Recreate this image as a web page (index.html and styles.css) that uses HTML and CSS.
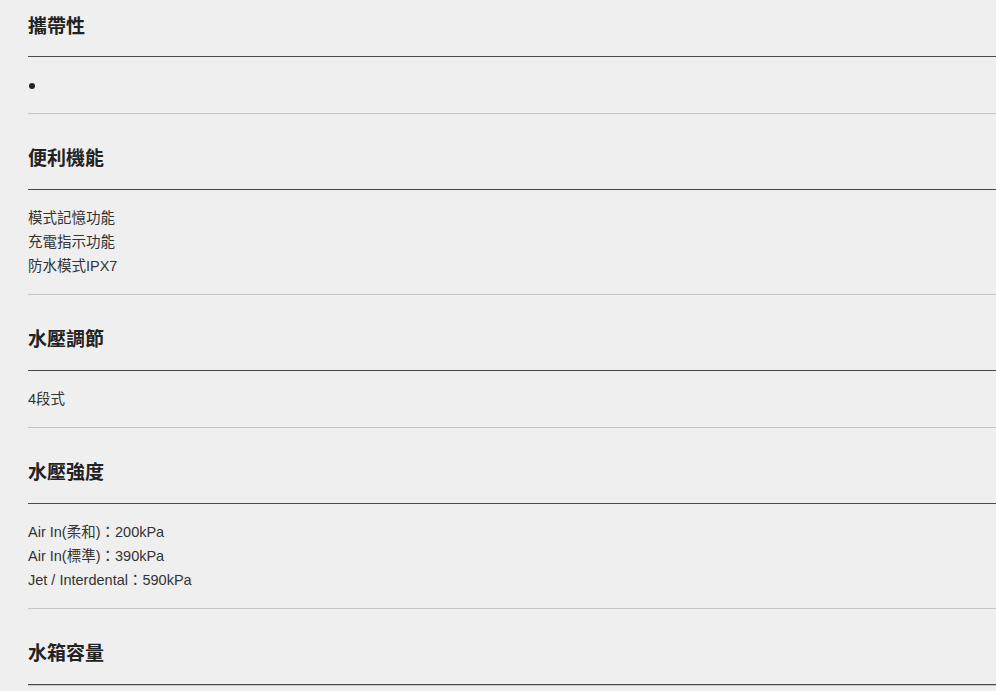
FILE: index.html
```html
<!DOCTYPE html>
<html lang="zh-Hant">
<head>
<meta charset="utf-8">
<title>規格</title>
<link rel="stylesheet" href="styles.css">
</head>
<body>
<div class="specs">
  <section class="spec spec-first">
    <h3 class="spec-title">攜帶性</h3>
    <ul class="spec-body bullets"><li><span class="dot"></span></li></ul>
  </section>
  <section class="spec">
    <h3 class="spec-title">便利機能</h3>
    <div class="spec-body">
      <p>模式記憶功能</p>
      <p>充電指示功能</p>
      <p>防水模式IPX7</p>
    </div>
  </section>
  <section class="spec">
    <h3 class="spec-title">水壓調節</h3>
    <div class="spec-body">
      <p>4段式</p>
    </div>
  </section>
  <section class="spec">
    <h3 class="spec-title">水壓強度</h3>
    <div class="spec-body">
      <p>Air In(柔和)：200kPa</p>
      <p>Air In(標準)：390kPa</p>
      <p>Jet / Interdental：590kPa</p>
    </div>
  </section>
  <section class="spec">
    <h3 class="spec-title">水箱容量</h3>
  </section>
</div>
</body>
</html>
```

FILE: styles.css
```css
html, body {
  margin: 0;
  padding: 0;
  background: #efefef;
}
body {
  font-family: "Liberation Sans", "Noto Sans CJK TC", sans-serif;
  color: #333;
  overflow: hidden;
}
.specs {
  padding-left: 28px;
}
.spec {
  border-bottom: 1px solid #c6c6c6;
}
.spec-title {
  margin: 0;
  padding: 32px 0 17px;
  font-size: 19px;
  line-height: 26px;
  font-weight: bold;
  color: #222;
  border-bottom: 1px solid #4a4a4a;
}
.spec-first .spec-title {
  padding-top: 14px;
  padding-bottom: 16px;
}
.spec-body {
  margin: 0;
  padding: 16px 0 16px;
  font-size: 14.5px;
  line-height: 24px;
}
.spec-body p {
  margin: 0;
}
.bullets {
  list-style: none;
  padding-left: 0;
}
.bullets li {
  height: 24px;
  display: flex;
  align-items: center;
}
.dot {
  width: 6px;
  height: 6px;
  margin: 2px 0 0 1px;
  border-radius: 50%;
  background: #222;
}
```
